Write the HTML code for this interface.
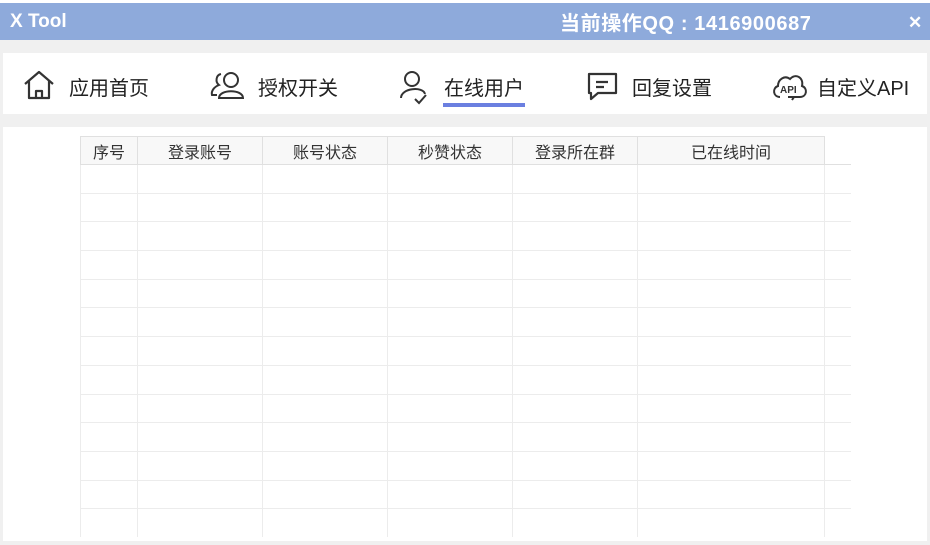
<!DOCTYPE html>
<html><head><meta charset="utf-8"><style>
*{margin:0;padding:0;box-sizing:border-box}
body{width:930px;height:545px;background:#f0f0f0;font-family:"Liberation Sans","Noto Sans CJK SC",sans-serif;position:relative;overflow:hidden}
.top{position:absolute;left:0;top:0;width:930px;height:3px;background:#fff}
.title{position:absolute;left:0;top:3px;width:930px;height:37px;background:#8eaadb;color:#fff;font-weight:bold}
.title .l{position:absolute;left:10px;top:8px;font-size:19px}
.title .m{position:absolute;left:560px;top:4px;font-size:20px;letter-spacing:0.6px;white-space:nowrap}
.title .x{position:absolute;left:908px;top:10px;font-size:17px}
.nav{position:absolute;left:3px;top:53px;width:924px;height:61px;background:#fff}
.it{position:absolute;top:0;height:61px;font-size:20px;color:#222}
.it span{position:absolute;top:19px;white-space:nowrap}
.it svg{position:absolute;top:14px}
.ul{position:absolute;left:440px;top:50px;width:82px;height:4px;background:#6b7fe0}
.cont{position:absolute;left:3px;top:127px;width:924px;height:414px;background:#fff}
table{position:absolute;left:77px;top:9px;border-collapse:collapse;table-layout:fixed}
td,th{border:1px solid #ececec;height:28.7px;font-weight:normal;font-size:16px;color:#333;padding:0}
th{background:#f8f8f8;height:28px;border-color:#e0e0e0}
</style></head><body>
<div class="top"></div>
<div class="title"><div class="l">X Tool</div><div class="m">当前操作QQ : 1416900687</div><div class="x">✕</div></div>
<div class="nav">
<div class="it" style="left:18px"><svg width="36" height="36" viewBox="0 0 36 36" fill="none" stroke="#333" stroke-width="2.2" stroke-linejoin="round"><path d="M4 17 L18 5 L32 17 M8 14 V31 H28 V14 M15 31 V24 H21 V31"/></svg><span style="left:48px">应用首页</span></div>
<div class="it" style="left:205px"><svg width="40" height="36" viewBox="0 0 40 36" fill="none" stroke="#333" stroke-width="2"><circle cx="23" cy="13" r="7"/><path d="M11 31 C11 22 35 22 35 31 Z"/><path d="M13 7 C8 8 7 15 11 18 C6 20 3 24 4 28 H9"/></svg><span style="left:50px">授权开关</span></div>
<div class="it" style="left:395px"><svg width="34" height="40" viewBox="0 0 34 40" fill="none" stroke="#333" stroke-width="2"><circle cx="14" cy="12" r="7"/><path d="M3 31 C3 21 25 19 27 27"/><path d="M17 32 L21 36 L28 28"/></svg><span style="left:46px">在线用户</span></div>
<div class="ul"></div>
<div class="it" style="left:583px"><svg width="34" height="36" viewBox="0 0 34 36" fill="none" stroke="#333" stroke-width="2.2" stroke-linejoin="round"><path d="M3 7 H30 V26 H12 L5 32 V26 H3 Z"/><path d="M10 15 H22 M10 20 H18"/></svg><span style="left:46px">回复设置</span></div>
<div class="it" style="left:767px"><svg width="40" height="36" viewBox="0 0 40 36" fill="none" stroke="#333" stroke-width="2"><path d="M10 30 C3 30 2 21 8 19 C8 12 15 8 20 12 C25 6 34 10 32 19 C38 21 37 30 30 30 H24"/><path d="M18 30 H24 L22 33"/><text x="10" y="26" font-size="10" font-family="Liberation Sans" font-weight="bold" fill="#333" stroke="none">API</text></svg><span style="left:47px">自定义API</span></div>
</div>
<div class="cont">
<table>
<colgroup><col style="width:57px"><col style="width:125px"><col style="width:125px"><col style="width:125px"><col style="width:125px"><col style="width:187px"><col style="width:26px"></colgroup>
<tr><th>序号</th><th>登录账号</th><th>账号状态</th><th>秒赞状态</th><th>登录所在群</th><th>已在线时间</th><th style="border-right:none;border-top:none;background:#fff"></th></tr>
<tr><td></td><td></td><td></td><td></td><td></td><td></td><td style="border-right:none"></td></tr>
<tr><td></td><td></td><td></td><td></td><td></td><td></td><td style="border-right:none"></td></tr>
<tr><td></td><td></td><td></td><td></td><td></td><td></td><td style="border-right:none"></td></tr>
<tr><td></td><td></td><td></td><td></td><td></td><td></td><td style="border-right:none"></td></tr>
<tr><td></td><td></td><td></td><td></td><td></td><td></td><td style="border-right:none"></td></tr>
<tr><td></td><td></td><td></td><td></td><td></td><td></td><td style="border-right:none"></td></tr>
<tr><td></td><td></td><td></td><td></td><td></td><td></td><td style="border-right:none"></td></tr>
<tr><td></td><td></td><td></td><td></td><td></td><td></td><td style="border-right:none"></td></tr>
<tr><td></td><td></td><td></td><td></td><td></td><td></td><td style="border-right:none"></td></tr>
<tr><td></td><td></td><td></td><td></td><td></td><td></td><td style="border-right:none"></td></tr>
<tr><td></td><td></td><td></td><td></td><td></td><td></td><td style="border-right:none"></td></tr>
<tr><td></td><td></td><td></td><td></td><td></td><td></td><td style="border-right:none"></td></tr>
<tr><td style="border-bottom:none"></td><td style="border-bottom:none"></td><td style="border-bottom:none"></td><td style="border-bottom:none"></td><td style="border-bottom:none"></td><td style="border-bottom:none"></td><td style="border:none"></td></tr>
</table>
</div>
</body></html>
